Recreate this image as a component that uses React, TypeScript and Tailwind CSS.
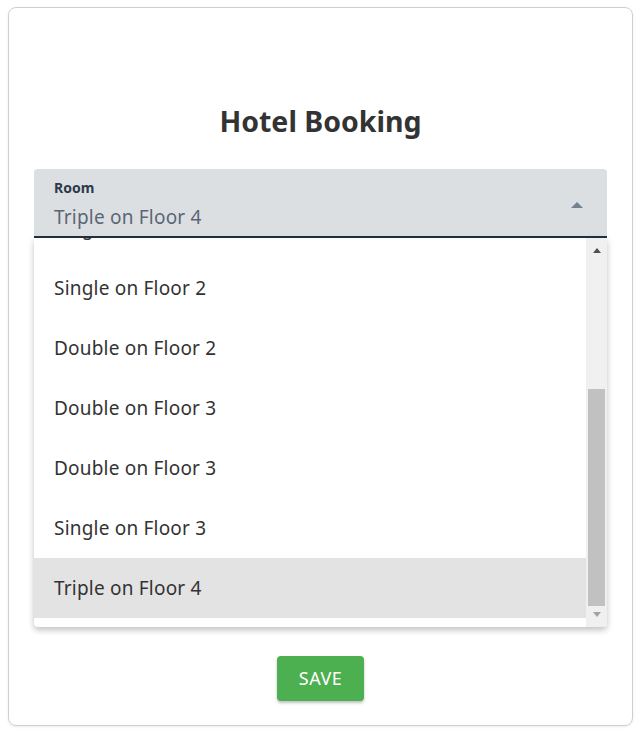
import React from "react";

const items = [
  "Single on Floor 1",
  "Single on Floor 2",
  "Double on Floor 2",
  "Double on Floor 3",
  "Double on Floor 3",
  "Single on Floor 3",
  "Triple on Floor 4",
];

export default function App() {
  return (
    <div className="bg-white w-[636px] h-[731px] pt-[7px] px-[8px]" style={{ fontFamily: '"Noto Sans", "Open Sans", sans-serif' }}>
      <div className="w-[625px] h-[719px] border border-[#cfcfcf] rounded-[8px] shadow-[0_1px_3px_rgba(0,0,0,0.08)] px-[25px] pt-[95px] flex flex-col">
        <h1 className="text-center text-[28.5px] leading-[36px] font-bold text-[#333333]">Hotel Booking</h1>
        <div className="relative mt-[30px]">
          <div className="h-[69px] bg-[#dcdfe2] rounded-t-[4px] border-b-2 border-[#233040] px-[20px] pt-[10px] flex items-start justify-between">
            <div className="flex flex-col">
              <span className="text-[14px] leading-[18px] font-bold text-[#2c3a4b]">Room</span>
              <span className="text-[19px] leading-[26px] text-[#5a6676] mt-[7px] tracking-[0.2px]">Triple on Floor 4</span>
            </div>
            <svg width="12" height="8" viewBox="0 0 12 8" className="mt-[22px] mr-[4px]">
              <path d="M0 7 L6 1 L12 7 Z" fill="#748090" />
            </svg>
          </div>
          <div className="absolute left-0 right-0 top-full h-[389px] bg-white rounded-b-[4px] shadow-[0_3px_6px_rgba(0,0,0,0.25)] overflow-hidden flex z-10">
            <div className="flex-1 overflow-hidden">
              <div className="flex flex-col -mt-[40px]">
                {items.map((t, i) => (
                  <div
                    key={i}
                    className={`h-[60px] flex items-center pl-[20px] text-[19px] tracking-[0.2px] text-[#333333] ${i === items.length - 1 ? "bg-[#e3e3e3]" : ""}`}
                  >
                    {t}
                  </div>
                ))}
              </div>
            </div>
            <div className="w-[21px] bg-[#f0f0f0] flex flex-col items-center">
              <div className="h-[17px] flex items-end justify-center pb-[2px]">
                <svg width="8" height="5" viewBox="0 0 8 5"><path d="M0 5 L4 0 L8 5 Z" fill="#505050" /></svg>
              </div>
              <div className="mt-[134px] w-[17px] h-[217px] bg-[#c1c1c1]" />
              <div className="flex-1 flex items-start justify-center pt-[6px]">
                <svg width="8" height="5" viewBox="0 0 8 5"><path d="M0 0 L8 0 L4 5 Z" fill="#a3a3a3" /></svg>
              </div>
            </div>
          </div>
        </div>
        <div className="h-[418px]" />
        <div className="flex justify-center">
          <button className="w-[87px] h-[45px] bg-[#4caf50] rounded-[4px] text-white text-[18px] tracking-[0.5px] shadow-[0_2px_3px_rgba(0,0,0,0.25)]">
            SAVE
          </button>
        </div>
      </div>
    </div>
  );
}
